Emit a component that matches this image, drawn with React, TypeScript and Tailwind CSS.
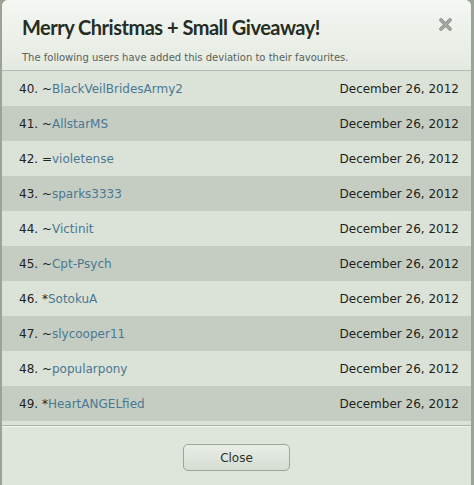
import React from 'react';

interface Fav {
  n: number;
  sym: string;
  name: string;
  date: string;
}

const favs: Fav[] = [
  { n: 40, sym: '~', name: 'BlackVeilBridesArmy2', date: 'December 26, 2012' },
  { n: 41, sym: '~', name: 'AllstarMS', date: 'December 26, 2012' },
  { n: 42, sym: '=', name: 'violetense', date: 'December 26, 2012' },
  { n: 43, sym: '~', name: 'sparks3333', date: 'December 26, 2012' },
  { n: 44, sym: '~', name: 'Victinit', date: 'December 26, 2012' },
  { n: 45, sym: '~', name: 'Cpt-Psych', date: 'December 26, 2012' },
  { n: 46, sym: '*', name: 'SotokuA', date: 'December 26, 2012' },
  { n: 47, sym: '~', name: 'slycooper11', date: 'December 26, 2012' },
  { n: 48, sym: '~', name: 'popularpony', date: 'December 26, 2012' },
  { n: 49, sym: '*', name: 'HeartANGELfied', date: 'December 26, 2012' },
];

const App: React.FC = () => {
  return (
    <div className="h-[485px] w-[474px] overflow-hidden bg-[#9aa396] font-['DejaVu_Sans',Verdana,sans-serif]">
      <div className="ml-[2px] flex h-full w-[469px] flex-col overflow-hidden rounded-t-[6px] bg-[#dbe2d7]">
        <div className="h-[71px] shrink-0 border-b border-[#b4bdb0] bg-gradient-to-b from-[#f4f7f2] to-[#e4eae1] px-[20px]">
          <div className="flex items-start justify-between pt-[13px]">
            <h1 className="font-['Lato',sans-serif] text-[20px] leading-[28px] font-bold tracking-[-0.5px] text-[#252d24]">
              Merry Christmas + Small Giveaway!
            </h1>
            <svg width="13" height="13" viewBox="0 0 13 13" className="mt-[5px] mr-[-1px]">
              <path d="M2 2 L11 11 M11 2 L2 11" stroke="#8a8f88" strokeWidth="3.6" strokeLinecap="round" />
              <path d="M2 2 L11 11 M11 2 L2 11" stroke="#a5a9a3" strokeWidth="2" strokeLinecap="round" />
            </svg>
          </div>
          <p className="mt-[10px] text-[10px] leading-[14px] text-[#5a6258]">
            The following users have added this deviation to their favourites.
          </p>
        </div>
        <div className="h-[354px] shrink-0">
          {favs.map((f, i) => (
            <div
              key={f.n}
              className={`flex h-[35px] items-center justify-between pr-[12px] pl-[17px] text-[12px] ${
                i % 2 === 1 ? 'bg-[#c5cdc2]' : 'bg-[#dbe2d7]'
              }`}
            >
              <span className="text-[#1f231e]">
                {f.n}. {f.sym}
                <span className="text-[#4a7894]">{f.name}</span>
              </span>
              <span className="text-[#1f1f1c]">{f.date}</span>
            </div>
          ))}
        </div>
        <div className="flex flex-1 justify-center border-t border-[#a9b2a5] bg-[#dee5da] pt-[18px] shadow-[inset_0_1px_0_#f3f6f1]">
          <button className="h-[27px] w-[107px] rounded-[5px] border border-[#9ba598] bg-gradient-to-b from-[#e8eee5] to-[#d6ddd3] text-[12px] text-[#2b312a]">
            Close
          </button>
        </div>
      </div>
    </div>
  );
};

export default App;
